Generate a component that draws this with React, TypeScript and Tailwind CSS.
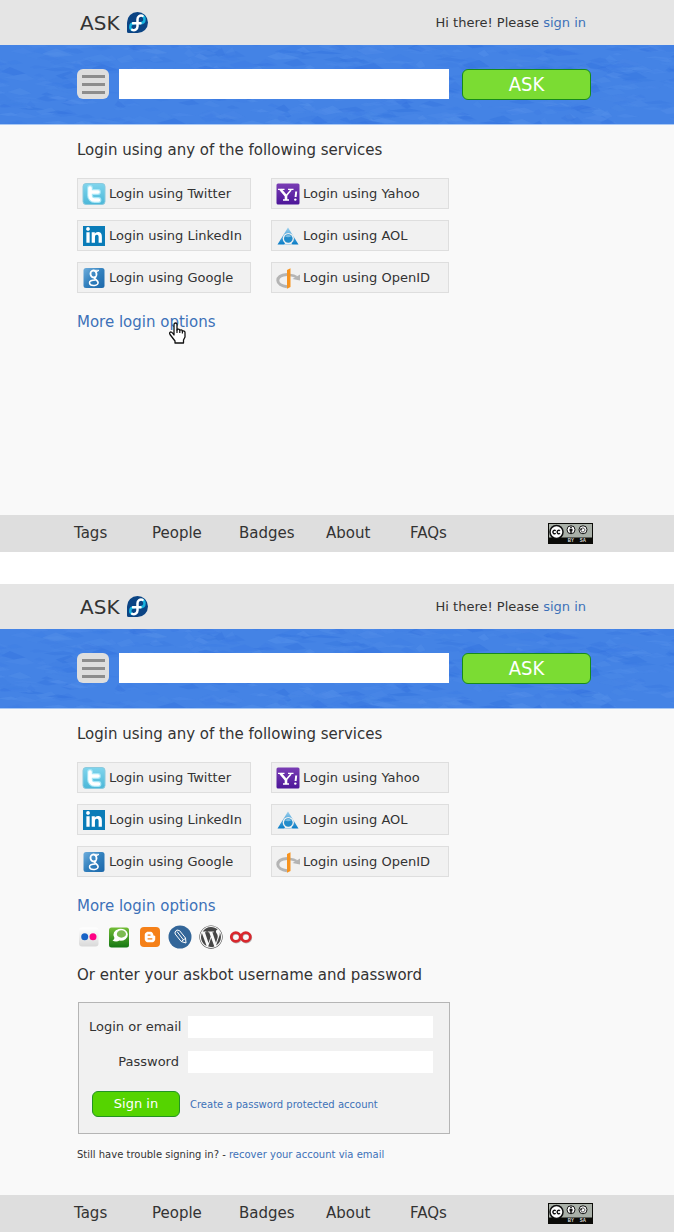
import type { ReactNode } from 'react';
import { FaBloggerB, FaLinkedinIn, FaWordpress } from 'react-icons/fa6';

const facetColors = ['#3372de', '#5590ea', '#3d7ce4', '#4d8ae8'];

function buildFacets() {
  let seed = 17;
  const next = () => {
    seed = (seed * 16807) % 2147483647;
    return seed / 2147483647;
  };
  return Array.from({ length: 620 }, (_, i) => {
    const x = next() * 720 - 20;
    const y = next() * 90 - 5;
    const w = 8 + next() * 26;
    const h = 2 + next() * 5;
    const points = [
      [x, y],
      [x + w * (0.3 + 0.4 * next()), y - h * 0.7],
      [x + w, y + h * 0.3],
      [x + w * (0.2 + 0.5 * next()), y + h * 0.6],
    ];
    return {
      points: points.map((p) => p.map((v) => v.toFixed(1)).join(',')).join(' '),
      fill: facetColors[Math.floor(next() * 4)],
      opacity: 0.15 + next() * 0.35,
      key: i,
    };
  });
}

const facets = buildFacets();

function BannerTexture() {
  return (
    <svg className="absolute inset-0 h-full w-full" viewBox="0 0 674 80" preserveAspectRatio="xMidYMid slice" aria-hidden="true">
      {facets.map((f) => (
        <polygon key={f.key} points={f.points} fill={f.fill} opacity={f.opacity} />
      ))}
    </svg>
  );
}

function FedoraLogo() {
  return (
    <svg className="h-[21px] w-[21px]" viewBox="0 0 42 42" aria-hidden="true">
      <path d="M21 0a21 21 0 1 1 0 42H3a3 3 0 0 1-3-3V21A21 21 0 0 1 21 0Z" fill="#0b4484" />
      <g fill="none" strokeWidth="5" strokeLinecap="round">
        <path d="M26 22.500c6 0 9-3.500 9-8s-2-6-4-6.800" stroke="#16b4e0" />
        <path d="M15 22.500c-5 0-8.500 3-8.500 7.500 0 3 1.500 5 4 6" stroke="#16b4e0" />
        <path d="M12 22.500h15M21 29V14.500c0-5 4.500-8.500 10-6.800M21 28.500c0 5.500-5 9-10.500 7.300" stroke="#fff" />
      </g>
    </svg>
  );
}

function TwitterIcon() {
  return (
    <svg className="h-6 w-6" viewBox="0 0 24 24" aria-hidden="true">
      <defs>
        <linearGradient id="tw" x1="0" y1="0" x2="0" y2="1">
          <stop offset="0" stopColor="#80d5ed" />
          <stop offset="1" stopColor="#4bb7d8" />
        </linearGradient>
      </defs>
      <rect x="1" y="1.500" width="22" height="21" rx="3" fill="url(#tw)" stroke="#8bcade" />
      <path d="M8 6v7.500a4.500 4.500 0 0 0 4.500 4.500h4M8 10h8" fill="none" stroke="#a6e6f7" strokeWidth="5.800" strokeLinecap="round" />
      <path d="M8 6v7.500a4.500 4.500 0 0 0 4.500 4.500h4M8 10h8" fill="none" stroke="#fff" strokeWidth="3.600" strokeLinecap="round" strokeLinejoin="round" />
    </svg>
  );
}

function LinkedInIcon() {
  return (
    <span className="flex h-6 w-6 items-center justify-center">
      <span className="flex h-5 w-[22px] items-center justify-center bg-[#0a7cb8] text-white">
        <FaLinkedinIn className="h-[18px] w-[18px]" aria-hidden="true" />
      </span>
    </span>
  );
}

function GoogleIcon() {
  return (
    <svg className="h-6 w-6" viewBox="0 0 24 24" aria-hidden="true">
      <defs>
        <linearGradient id="gg" x1="0" y1="0" x2="1" y2="1">
          <stop offset="0" stopColor="#6faedd" />
          <stop offset="0.5" stopColor="#3280bd" />
          <stop offset="1" stopColor="#1b67aa" />
        </linearGradient>
      </defs>
      <rect x="1.500" y="2" width="21" height="20" rx="2.500" fill="url(#gg)" />
      <g fill="none" stroke="#fff">
        <ellipse cx="11.500" cy="8" rx="3" ry="3.500" strokeWidth="1.800" transform="rotate(-14 11.500 8)" />
        <path d="M11.500 4.300h5.500l-1.500 1.200h-2" strokeWidth="1" />
        <path d="M14 10.500c-1 1.200-2 1.200-1.200 2.200 1 1.200 3.700 2 3.200 4.300" strokeWidth="1.800" />
        <path d="M13.500 14c-4 0-6.200 1-6 2.900.2 1.800 2.500 2.700 5 2.500 2.300-.2 3.700-1.200 3.500-2.800" strokeWidth="1.500" />
      </g>
    </svg>
  );
}

function YahooIcon() {
  return (
    <svg className="h-6 w-6" viewBox="0 0 24 24" aria-hidden="true">
      <defs>
        <linearGradient id="yh" x1="0" y1="0" x2="0" y2="1">
          <stop offset="0" stopColor="#7a3db4" />
          <stop offset="1" stopColor="#4c1599" />
        </linearGradient>
      </defs>
      <rect x="0.500" y="1.500" width="23" height="21" rx="1.500" fill="url(#yh)" />
      <g fill="none" stroke="#fff">
        <path d="M4.500 7.500l5.500 6.500v4" strokeWidth="2.600" />
        <path d="M10 14l5-6" strokeWidth="1.600" />
        <path d="M2 7.400h6.500M12 7.400h5.500M7 18h6" strokeWidth="1.300" />
        <path d="M20.200 9.500l-.6 5.500" strokeWidth="2" />
      </g>
      <circle cx="19.300" cy="17.600" r="1.200" fill="#fff" />
    </svg>
  );
}

function AolIcon() {
  return (
    <svg className="h-6 w-6" viewBox="0 0 24 24" aria-hidden="true">
      <defs>
        <linearGradient id="aol" x1="0" y1="0" x2="0" y2="1">
          <stop offset="0" stopColor="#9bd0ee" />
          <stop offset="1" stopColor="#087cc6" />
        </linearGradient>
      </defs>
      <path d="M12 3.500L22.500 20.500h-21Z" fill="url(#aol)" />
      <circle cx="12.300" cy="14.500" r="5.600" fill="#f1f1f1" />
      <path d="M8 20.500l2.500-3h3.500l2.500 3Z" fill="#f1f1f1" />
      <circle cx="12.300" cy="14.500" r="4.300" fill="#238cca" />
      <path d="M9 12.500a4 4 0 0 1 6.500-.3 7 7 0 0 1-6.500.3Z" fill="#79bce2" />
    </svg>
  );
}

function OpenIdIcon() {
  return (
    <svg className="h-6 w-6" viewBox="0 0 24 24" aria-hidden="true">
      <path d="M11 8.500C5 9 1.800 11.500 1.800 14.500S5.500 20 11 20.700" fill="none" stroke="#b4b4b4" strokeWidth="3" />
      <path d="M14 9c3 .3 5 1 6.500 2" fill="none" stroke="#b4b4b4" strokeWidth="2.600" />
      <path d="M24 8.500v6l-7.500-1.500Z" fill="#b4b4b4" />
      <path d="M11 4l3.500-1.800v18.800L11 22.800Z" fill="#f7931e" />
    </svg>
  );
}

function FlickrIcon() {
  return (
    <svg className="h-6 w-6" viewBox="0 0 24 24" aria-hidden="true">
      <defs>
        <linearGradient id="fl" x1="0" y1="0" x2="0" y2="1">
          <stop offset="0" stopColor="#fff" />
          <stop offset="1" stopColor="#d9d9d9" />
        </linearGradient>
      </defs>
      <rect x="2" y="2.500" width="19.500" height="19" rx="3" fill="url(#fl)" />
      <circle cx="7.700" cy="11.800" r="3.500" fill="#1763c6" />
      <circle cx="16" cy="11.800" r="3.500" fill="#ff0084" />
    </svg>
  );
}

function TechnoratiIcon() {
  return (
    <svg className="h-6 w-6" viewBox="0 0 24 24" aria-hidden="true">
      <defs>
        <linearGradient id="tc" x1="0" y1="0" x2="0" y2="1">
          <stop offset="0" stopColor="#73bd37" />
          <stop offset="1" stopColor="#147713" />
        </linearGradient>
      </defs>
      <rect x="2" y="2.500" width="20" height="20" rx="2.500" fill="url(#tc)" />
      <path d="M5.500 15.500c1.500-.8 2-1.800 1.800-3A7.200 6 0 1 1 12.500 15.600c-2 1.200-5 1.200-7-.1Z" fill="#fff" />
      <ellipse cx="14.400" cy="9" rx="4.600" ry="3.700" fill="#7cbb52" />
    </svg>
  );
}

function BloggerIcon() {
  return (
    <span className="flex h-6 w-6 items-center justify-center">
      <span className="flex h-5 w-5 items-center justify-center rounded-[4px] bg-[#f58018] text-white">
        <FaBloggerB className="h-3 w-3" aria-hidden="true" />
      </span>
    </span>
  );
}

function LiveJournalIcon() {
  return (
    <svg className="h-6 w-6" viewBox="0 0 24 24" aria-hidden="true">
      <circle cx="12" cy="12" r="11.500" fill="#336699" />
      <g fill="none" stroke="#fff" strokeWidth="1" strokeLinejoin="round">
        <path d="M7 7l1.800-2 2.700.6 6 7.400.5 5-4.800-1.500-6-7.500Z" />
        <path d="M9 6.500l6.500 8.500M13.500 16.300l4-3" />
      </g>
    </svg>
  );
}

function WordPressIcon() {
  return <FaWordpress className="h-6 w-6 text-[#464646]" aria-hidden="true" />;
}

function LoopIcon() {
  return (
    <svg className="h-6 w-6" viewBox="0 0 24 24" aria-hidden="true">
      <g fill="none" strokeWidth="2.800">
        <g stroke="#b5b5b5">
          <ellipse cx="7.300" cy="12.700" rx="4.500" ry="4.300" />
          <ellipse cx="17.300" cy="12.700" rx="4.500" ry="4.300" />
        </g>
        <g stroke="#d9272d">
          <ellipse cx="6.800" cy="12" rx="4.500" ry="4.300" />
          <ellipse cx="16.800" cy="12" rx="4.500" ry="4.300" />
        </g>
      </g>
    </svg>
  );
}

function LicenseBadge() {
  return (
    <svg className="h-[21px] w-[45px]" viewBox="0 0 90 42" role="img" aria-label="Creative Commons BY-SA">
      <rect width="90" height="42" fill="#0b0b08" />
      <rect x="2" y="2" width="86" height="27" fill="#a9b0a8" />
      <circle cx="17" cy="18" r="14.500" fill="#111" />
      <circle cx="17" cy="18" r="11.500" fill="#fff" />
      <g fill="none" stroke="#111" strokeWidth="2.800">
        <path d="M15.500 15.500a3.400 3.400 0 1 0 0 5M24 15.500a3.400 3.400 0 1 0 0 5" />
      </g>
      <circle cx="46" cy="13.500" r="8" fill="#fff" stroke="#111" strokeWidth="2" />
      <circle cx="46" cy="8.800" r="1.800" fill="#111" />
      <path d="M43 11.500h6v5h-1.500v4h-3v-4H43Z" fill="#111" />
      <circle cx="70" cy="13.500" r="8" fill="#fff" stroke="#111" strokeWidth="2" />
      <path d="M66 12.500a4 4 0 1 1 0 3M64 12h4l-2 3Z" fill="none" stroke="#111" strokeWidth="1.600" />
      <g fill="#ddd" fontFamily="Liberation Sans, sans-serif" fontSize="9" fontWeight="700" textAnchor="middle">
        <text x="46" y="37">BY</text>
        <text x="70" y="37">SA</text>
      </g>
    </svg>
  );
}

function HandCursor() {
  return (
    <svg className="absolute top-3 left-[91px] h-[22px] w-[19px]" viewBox="0 0 19 22" aria-hidden="true">
      <path
        d="M6 13V2.500a1.500 1.500 0 0 1 3 0V8c.3-1.200 2.600-1 2.800.4.700-.9 2.400-.5 2.600.7 1-.6 2.600 0 2.600 1.400V15l-1.500 3v3H7v-2L2 12.500c-.8-1.300-.3-2.600.8-2.700C4.200 9.800 5 11.500 6 13Z"
        fill="#fff"
        stroke="#111"
        strokeWidth="1.300"
        strokeLinejoin="round"
      />
      <path d="M9 7.500V11M11.800 8.500V11M14.400 9V11.500" stroke="#111" strokeWidth="1.200" />
    </svg>
  );
}

function Header() {
  return (
    <header>
      <div className="flex h-[45px] items-center justify-between bg-[#e5e5e5] pr-[88px] pl-20">
        <a href="#home" className="flex items-center gap-[7px] text-xl">
          <span>ASK</span>
          <FedoraLogo />
        </a>
        <p className="text-[13px]">
          Hi there! Please{' '}
          <a href="#signin" className="text-[#3d71b8]">
            sign in
          </a>
        </p>
      </div>
      <div className="relative h-20 border-b border-[#a9c8f3] bg-[#4483e5]">
        <BannerTexture />
        <form className="relative flex items-start pt-6 pr-[83px] pl-[77px]" onSubmit={(e) => e.preventDefault()}>
          <button type="button" aria-label="Menu" className="flex h-[30px] w-8 flex-col items-center justify-center gap-[5px] rounded-md bg-[#dedede]">
            <span className="h-[3px] w-[23px] bg-[#8d8d8d]" />
            <span className="h-[3px] w-[23px] bg-[#8d8d8d]" />
            <span className="h-[3px] w-[23px] bg-[#8d8d8d]" />
          </button>
          <input type="text" aria-label="Question" className="ml-2.5 h-[30px] min-w-0 flex-1 bg-white px-2 text-sm outline-none" />
          <button type="submit" className="ml-[13px] flex h-[31px] w-[129px] items-center justify-center rounded-md border border-[#178a1c] bg-[#7bdc33] pb-0.5 font-['DejaVu_Sans_Condensed','DejaVu_Sans',sans-serif] text-xl leading-5 text-white">
            ASK
          </button>
        </form>
      </div>
    </header>
  );
}

const services: { name: string; icon: ReactNode }[] = [
  { name: 'Twitter', icon: <TwitterIcon /> },
  { name: 'Yahoo', icon: <YahooIcon /> },
  { name: 'LinkedIn', icon: <LinkedInIcon /> },
  { name: 'AOL', icon: <AolIcon /> },
  { name: 'Google', icon: <GoogleIcon /> },
  { name: 'OpenID', icon: <OpenIdIcon /> },
];

function Services() {
  return (
    <section>
      <h1 className="text-[15px] leading-5">Login using any of the following services</h1>
      <div className="mt-[18px] grid grid-cols-[174px_178px] gap-x-5 gap-y-[11px]">
        {services.map((s) => (
          <button key={s.name} type="button" className="flex h-[31px] items-center gap-[3px] border border-[#dedede] bg-[#f1f1f1] pl-1 text-[13px] whitespace-nowrap">
            {s.icon}
            <span>Login using {s.name}</span>
          </button>
        ))}
      </div>
    </section>
  );
}

function Footer() {
  return (
    <footer className="flex h-[37px] items-center justify-between bg-[#dedede] pr-[81px] pl-[74px]">
      <nav className="grid grid-cols-[78px_87px_87px_84px_40px] text-[15px]">
        <a href="#tags">Tags</a>
        <a href="#people">People</a>
        <a href="#badges">Badges</a>
        <a href="#about">About</a>
        <a href="#faqs">FAQs</a>
      </nav>
      <LicenseBadge />
    </footer>
  );
}

const moreProviders: { name: string; icon: ReactNode }[] = [
  { name: 'Flickr', icon: <FlickrIcon /> },
  { name: 'Technorati', icon: <TechnoratiIcon /> },
  { name: 'Blogger', icon: <BloggerIcon /> },
  { name: 'LiveJournal', icon: <LiveJournalIcon /> },
  { name: 'WordPress', icon: <WordPressIcon /> },
  { name: 'ClaimID', icon: <LoopIcon /> },
];

function PasswordForm() {
  return (
    <form
      className="mt-[17px] ml-px flex w-[372px] flex-col border border-[#b5b5b5] bg-[#f1f1f1] pt-[13px] pr-4 pb-4 pl-[10px] text-[13px]"
      onSubmit={(e) => e.preventDefault()}
    >
      <div className="grid grid-cols-[90px_1fr] items-center gap-x-[9px] gap-y-[13px]">
        <label htmlFor="login" className="text-right whitespace-nowrap">
          Login or email
        </label>
        <input id="login" type="text" className="h-[22px] w-full bg-white px-1 outline-none" />
        <label htmlFor="password" className="text-right">
          Password
        </label>
        <input id="password" type="password" className="h-[22px] w-full bg-white px-1 outline-none" />
      </div>
      <div className="mt-[18px] flex items-center gap-[10px] pl-[3px]">
        <button type="submit" className="h-[26px] w-[88px] rounded-md border border-[#239323] bg-[#55d400] text-white">
          Sign in
        </button>
        <a href="#create" className="text-[10px] text-[#3d71b8]">
          Create a password protected account
        </a>
      </div>
    </form>
  );
}

export default function App() {
  return (
    <div className="bg-white font-['DejaVu_Sans',sans-serif] text-[#333]">
      <div className="bg-[#f9f9f9]">
        <Header />
        <main className="px-[77px] pt-[15px] pb-[181px]">
          <Services />
          <div className="relative mt-[17px]">
            <a href="#more" className="text-[15px] leading-5 text-[#3d71b8]">
              More login options
            </a>
            <HandCursor />
          </div>
        </main>
        <Footer />
      </div>
      <div className="mt-8 bg-[#f9f9f9]">
        <Header />
        <main className="px-[77px] pt-[15px] pb-8">
          <Services />
          <div className="mt-[19px] flex">
            <a href="#more" className="text-[15px] leading-5 text-[#3d71b8]">
              More login options
            </a>
          </div>
          <div className="mt-[9px] flex w-44 justify-between">
            {moreProviders.map((p) => (
              <button key={p.name} type="button" aria-label={p.name}>
                {p.icon}
              </button>
            ))}
          </div>
          <h2 className="mt-4 text-[15px] leading-5">Or enter your askbot username and password</h2>
          <PasswordForm />
          <p className="mt-[13px] text-[10px] leading-4">
            Still have trouble signing in? -{' '}
            <a href="#recover" className="text-[#3d71b8]">
              recover your account via email
            </a>
          </p>
        </main>
        <Footer />
      </div>
    </div>
  );
}
